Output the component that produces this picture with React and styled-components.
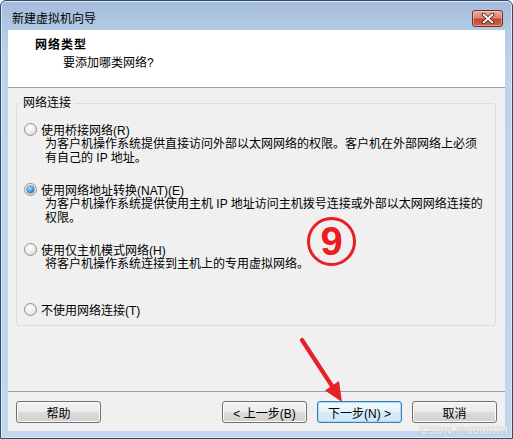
import React from 'react';
import styled, { createGlobalStyle } from 'styled-components';

const GlobalStyle = createGlobalStyle`
  html, body { margin: 0; padding: 0; background: #ffffff; }
  body {
    font-family: "Liberation Sans", "Noto Sans CJK SC", sans-serif;
    font-size: 12px;
    color: #000;
  }
  * { box-sizing: border-box; }
`;

const Window = styled.div`
  position: relative;
  width: 513px;
  height: 439px;
  border: 1px solid #354b66;
  border-radius: 6px 6px 0 0;
  background: linear-gradient(to bottom, #a3bcd9 0px, #b3cae5 28px, #bcd3ec 60px, #c0d7ef 100%);
  box-shadow: inset 0 0 0 1px #dbe8f6;
  display: flex;
  flex-direction: column;
  overflow: hidden;
`;

const TitleBar = styled.div`
  height: 29px;
  flex: none;
  display: flex;
  align-items: flex-start;
  justify-content: space-between;
`;

const TitleText = styled.div`
  margin: 10px 0 0 11px;
  line-height: 16px;
  font-size: 12px;
  color: #000;
`;

const CloseButton = styled.div`
  margin: 9px 9px 0 0;
  width: 31px;
  height: 17px;
  border: 1px solid #6e2f27;
  border-radius: 3px;
  background: linear-gradient(to bottom, #e9ad9f 0%, #d88472 45%, #c4452f 55%, #cf6450 100%);
  box-shadow: inset 0 0 0 1px rgba(255, 220, 210, 0.45);
  display: flex;
  align-items: center;
  justify-content: center;
`;

const Client = styled.div`
  flex: 1;
  margin: 0 7px 7px;
  background: #f0f0f0;
  display: flex;
  flex-direction: column;
`;

const Header = styled.div`
  height: 58px;
  flex: none;
  background: #ffffff;
  border-bottom: 1px solid #a0a0a0;
  padding: 8px 0 0 27px;
`;

const HeaderTitle = styled.div`
  font-weight: bold;
  font-size: 12px;
  line-height: 14px;
  letter-spacing: 1px;
`;

const HeaderSub = styled.div`
  margin: 4px 0 0 28px;
  font-size: 12px;
  line-height: 14px;
`;

const Body = styled.div`
  flex: 1;
  padding: 8px 9px 0 8px;
`;

const GroupBox = styled.fieldset`
  margin: 0;
  padding: 0 0 8px 0;
  border: 1px solid #d5dfe5;
  border-radius: 3px;
  min-width: 0;
`;

const Legend = styled.legend`
  margin-left: 3px;
  padding: 0 3px;
  font-size: 12px;
  line-height: 14px;
`;

const OptionList = styled.div`
  display: grid;
  grid-template-rows: 60px 60px 60px auto;
  margin-top: 11px;
  padding-left: 7px;
`;

const Option = styled.div`
  display: flex;
  flex-direction: column;
`;

const OptionLabel = styled.div`
  display: flex;
  align-items: center;
  height: 16px;
  gap: 4px;
  white-space: nowrap;
`;

const Radio = styled.span`
  position: relative;
  width: 13px;
  height: 13px;
  flex: none;
  border-radius: 50%;
  border: 1px solid #8f9091;
  background: radial-gradient(circle at 40% 35%, #ffffff 0%, #f1f1f1 40%, #d4d4d4 100%);
  &::after {
    content: "";
    display: ${p => (p.$checked ? 'block' : 'none')};
    position: absolute;
    left: 2px;
    top: 2px;
    width: 7px;
    height: 7px;
    border-radius: 50%;
    background: radial-gradient(circle at 40% 35%, #b9e4ff 0%, #4a9de0 45%, #1a5aa6 100%);
    box-shadow: 0 0 0 0.5px #2d5c8e;
  }
`;

const Desc = styled.div`
  padding-left: 21px;
  line-height: 14px;
  white-space: nowrap;
`;

const Footer = styled.div`
  height: 40px;
  flex: none;
  border-top: 1px solid #a0a0a0;
  padding: 9px 8px 0;
  display: flex;
  justify-content: space-between;
  align-items: flex-start;
`;

const ButtonGroup = styled.div`
  display: flex;
  gap: 10px;
`;

const Button = styled.div`
  width: 85px;
  height: 22px;
  border: 1px solid ${p => (p.$primary ? '#3c7fb1' : '#707070')};
  border-radius: 3px;
  background: ${p =>
    p.$primary
      ? 'linear-gradient(to bottom, #f2f9fe 0%, #e5f3fc 50%, #d7ecfa 50%, #cfe7f8 100%)'
      : 'linear-gradient(to bottom, #f2f2f2 0%, #ebebeb 50%, #dddddd 50%, #cfcfcf 100%)'};
  box-shadow: inset 0 0 0 1px ${p => (p.$primary ? '#a8d8f3' : '#fbfbfb')};
  display: flex;
  align-items: center;
  justify-content: center;
  font-size: 12px;
  white-space: nowrap;
`;

const CircledNumber = styled.div`
  position: absolute;
  left: 306px;
  top: 216px;
  width: 49px;
  height: 49px;
  border: 3.5px solid #ec1c24;
  border-radius: 50%;
  color: #ec1c24;
  font-family: "Liberation Sans", sans-serif;
  font-weight: bold;
  font-size: 40px;
  line-height: 42px;
  text-align: center;
`;

const ArrowSvg = styled.svg`
  position: absolute;
  left: 294px;
  top: 334px;
  pointer-events: none;
`;

const Watermark = styled.div`
  position: absolute;
  right: 4px;
  bottom: 2px;
  font-family: "Liberation Sans", sans-serif;
  font-weight: bold;
  font-size: 11px;
  color: rgba(255, 255, 255, 0.8);
  text-shadow: 0 0 1px rgba(90, 90, 90, 0.5);
  letter-spacing: 0.3px;
`;

const options = [
  { label: '使用桥接网络(R)', lines: ['为客户机操作系统提供直接访问外部以太网网络的权限。客户机在外部网络上必须', '有自己的 IP 地址。'] },
  { label: '使用网络地址转换(NAT)(E)', checked: true, lines: ['为客户机操作系统提供使用主机 IP 地址访问主机拨号连接或外部以太网网络连接的', '权限。'] },
  { label: '使用仅主机模式网络(H)', lines: ['将客户机操作系统连接到主机上的专用虚拟网络。'] },
  { label: '不使用网络连接(T)', lines: [] },
];

export default function App() {
  return (
    <>
      <GlobalStyle />
      <Window>
        <TitleBar>
          <TitleText>新建虚拟机向导</TitleText>
          <CloseButton>
            <svg width="14" height="11" viewBox="0 0 14 11">
              <path d="M2.5 1.5 L11.5 9.5 M11.5 1.5 L2.5 9.5" stroke="#4a2019" strokeWidth="3.6" strokeLinecap="round" />
              <path d="M2.5 1.5 L11.5 9.5 M11.5 1.5 L2.5 9.5" stroke="#ffffff" strokeWidth="1.8" strokeLinecap="round" />
            </svg>
          </CloseButton>
        </TitleBar>
        <Client>
          <Header>
            <HeaderTitle>网络类型</HeaderTitle>
            <HeaderSub>要添加哪类网络?</HeaderSub>
          </Header>
          <Body>
            <GroupBox>
              <Legend>网络连接</Legend>
              <OptionList>
                {options.map(o => (
                  <Option key={o.label}>
                    <OptionLabel>
                      <Radio $checked={o.checked} />
                      <span>{o.label}</span>
                    </OptionLabel>
                    {o.lines.map(l => (
                      <Desc key={l}>{l}</Desc>
                    ))}
                  </Option>
                ))}
              </OptionList>
            </GroupBox>
          </Body>
          <Footer>
            <Button>帮助</Button>
            <ButtonGroup>
              <Button>&lt; 上一步(B)</Button>
              <Button $primary>下一步(N) &gt;</Button>
              <Button>取消</Button>
            </ButtonGroup>
          </Footer>
        </Client>
        <CircledNumber>9</CircledNumber>
        <ArrowSvg width="56" height="72" viewBox="0 0 56 72">
          <path d="M7 5 L37 51" stroke="#e8202a" strokeWidth="4.2" strokeLinecap="round" />
          <polygon points="47,67 30,55.5 44,46" fill="#e8202a" />
        </ArrowSvg>
        <Watermark>CSDN @8888XH</Watermark>
      </Window>
    </>
  );
}
